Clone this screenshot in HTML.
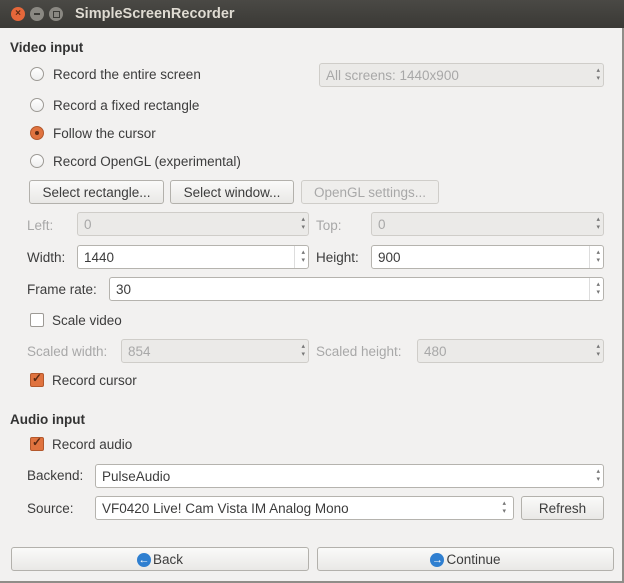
<!DOCTYPE html><html><head><style>
body{margin:0;width:624px;height:583px;overflow:hidden;background:#f2f1f0;font-family:"Liberation Sans",sans-serif;font-size:13.5px;color:#3c3c3c;position:relative}
.a{position:absolute;white-space:nowrap}
.t{position:absolute;line-height:24px;white-space:nowrap;margin-top:1px}
.f{position:absolute;height:22px;border:1px solid #b5b3ae;border-radius:3px;background:#fff;line-height:23px;padding-left:6px;box-sizing:content-box}
.f.d{background:#ebeae8;color:#a8a8a8;border-color:#cfcdc9}
.f .ar{position:absolute;right:3px;top:3px;font-size:7px;line-height:8px;color:#777;text-align:center}
.f .sp{position:absolute;right:0;top:0;width:13px;height:22px;border-left:1px solid #ddd}
.b{position:absolute;height:22px;border:1px solid #b3b1ac;border-radius:3px;background:linear-gradient(#fafaf9,#e9e8e6);display:flex;align-items:center;justify-content:center;color:#3c3c3c;padding-top:1px;box-sizing:content-box;height:21px}
.dis{color:#a8a8a8 !important}
.r{position:absolute;width:12px;height:12px;border:1px solid #9d9a95;border-radius:50%;background:linear-gradient(#fff,#eee)}
.c{position:absolute;width:12px;height:12px;border:1px solid #9d9a95;border-radius:2px;background:#fff}
.ck{background:#e0733f;border-color:#b3582c}
.ic{display:inline-block;width:14px;height:14px;border-radius:50%;background:#2f7fd0;color:#fff;font-size:11px;line-height:14px;text-align:center;font-weight:bold;margin-right:2px}
h{position:absolute;font-weight:bold;color:#333}
</style></head><body>
<div class="a" style="left:0;top:0;width:624px;height:28px;background:linear-gradient(#4a4945,#3a3935)"></div>
<div class="a" style="left:11px;top:7px;width:14px;height:14px;border-radius:50%;background:#e5673a;color:#5a2a14;font-size:10px;font-weight:bold;text-align:center;line-height:14px">×</div>
<div class="a" style="left:30px;top:7px;width:14px;height:14px;border-radius:50%;background:#8a8882"></div>
<div class="a" style="left:34px;top:13px;width:6px;height:2px;background:#3c3b37"></div>
<div class="a" style="left:49px;top:7px;width:14px;height:14px;border-radius:50%;background:#8a8882"></div>
<div class="a" style="left:53px;top:11px;width:5px;height:5px;border:1px solid #3c3b37"></div>
<div class="a" style="left:75px;top:6px;color:#dfdbd2;font-weight:bold;font-size:14.5px">SimpleScreenRecorder</div>
<div class="a" style="left:622px;top:28px;width:2px;height:555px;background:#8f8d88"></div>
<div class="a" style="left:0;top:581px;width:624px;height:2px;background:#8f8d88"></div>

<h style="left:10px;top:40px">Video input</h>
<div class="r" style="left:30px;top:67px"></div><div class="t" style="left:53px;top:62px">Record the entire screen</div>
<div class="f d" style="left:319px;top:63px;width:277px">All screens: 1440x900<span class="ar">▴<br>▾</span></div>
<div class="r" style="left:30px;top:98px"></div><div class="t" style="left:53px;top:93px">Record a fixed rectangle</div>
<div class="r" style="left:30px;top:126px;background:#e0733f;border-color:#b3582c"></div><div class="a" style="left:35px;top:131px;width:4px;height:4px;border-radius:50%;background:#5a2a14"></div><div class="t" style="left:53px;top:121px">Follow the cursor</div>
<div class="r" style="left:30px;top:154px"></div><div class="t" style="left:53px;top:149px">Record OpenGL (experimental)</div>
<div class="b" style="left:29px;top:180px;width:133px">Select rectangle...</div>
<div class="b" style="left:170px;top:180px;width:122px">Select window...</div>
<div class="b dis" style="left:301px;top:180px;width:136px;border-color:#cfcdc9;background:#efeeec">OpenGL settings...</div>

<div class="t dis" style="left:27px;top:213px">Left:</div>
<div class="f d" style="left:77px;top:212px;width:224px">0<span class="ar">▴<br>▾</span></div>
<div class="t dis" style="left:316px;top:213px">Top:</div>
<div class="f d" style="left:371px;top:212px;width:225px">0<span class="ar">▴<br>▾</span></div>
<div class="t" style="left:27px;top:245px">Width:</div>
<div class="f" style="left:77px;top:245px;width:224px">1440<span class="sp"></span><span class="ar">▴<br>▾</span></div>
<div class="t" style="left:316px;top:245px">Height:</div>
<div class="f" style="left:371px;top:245px;width:225px">900<span class="sp"></span><span class="ar">▴<br>▾</span></div>
<div class="t" style="left:27px;top:277px">Frame rate:</div>
<div class="f" style="left:109px;top:277px;width:487px">30<span class="sp"></span><span class="ar">▴<br>▾</span></div>
<div class="c" style="left:30px;top:313px"></div><div class="t" style="left:52px;top:308px">Scale video</div>
<div class="t dis" style="left:27px;top:339px">Scaled width:</div>
<div class="f d" style="left:121px;top:339px;width:180px">854<span class="ar">▴<br>▾</span></div>
<div class="t dis" style="left:316px;top:339px">Scaled height:</div>
<div class="f d" style="left:417px;top:339px;width:179px">480<span class="ar">▴<br>▾</span></div>
<div class="c ck" style="left:30px;top:373px"></div><div class="a" style="left:32px;top:371px;color:#5a2a14;font-size:12px;font-weight:bold">✓</div><div class="t" style="left:52px;top:368px">Record cursor</div>

<h style="left:10px;top:412px">Audio input</h>
<div class="c ck" style="left:30px;top:437px"></div><div class="a" style="left:32px;top:435px;color:#5a2a14;font-size:12px;font-weight:bold">✓</div><div class="t" style="left:52px;top:432px">Record audio</div>
<div class="t" style="left:27px;top:463px">Backend:</div>
<div class="f" style="left:95px;top:464px;width:501px">PulseAudio<span class="ar">▴<br>▾</span></div>
<div class="t" style="left:27px;top:496px">Source:</div>
<div class="f" style="left:95px;top:496px;width:411px">VF0420 Live! Cam Vista IM Analog Mono<span class="ar" style="right:7px">▴<br>▾</span></div>
<div class="b" style="left:521px;top:496px;width:81px">Refresh</div>

<div class="b" style="left:11px;top:547px;width:296px"><span class="ic">←</span>Back</div>
<div class="b" style="left:317px;top:547px;width:295px"><span class="ic">→</span>Continue</div>
</body></html>
